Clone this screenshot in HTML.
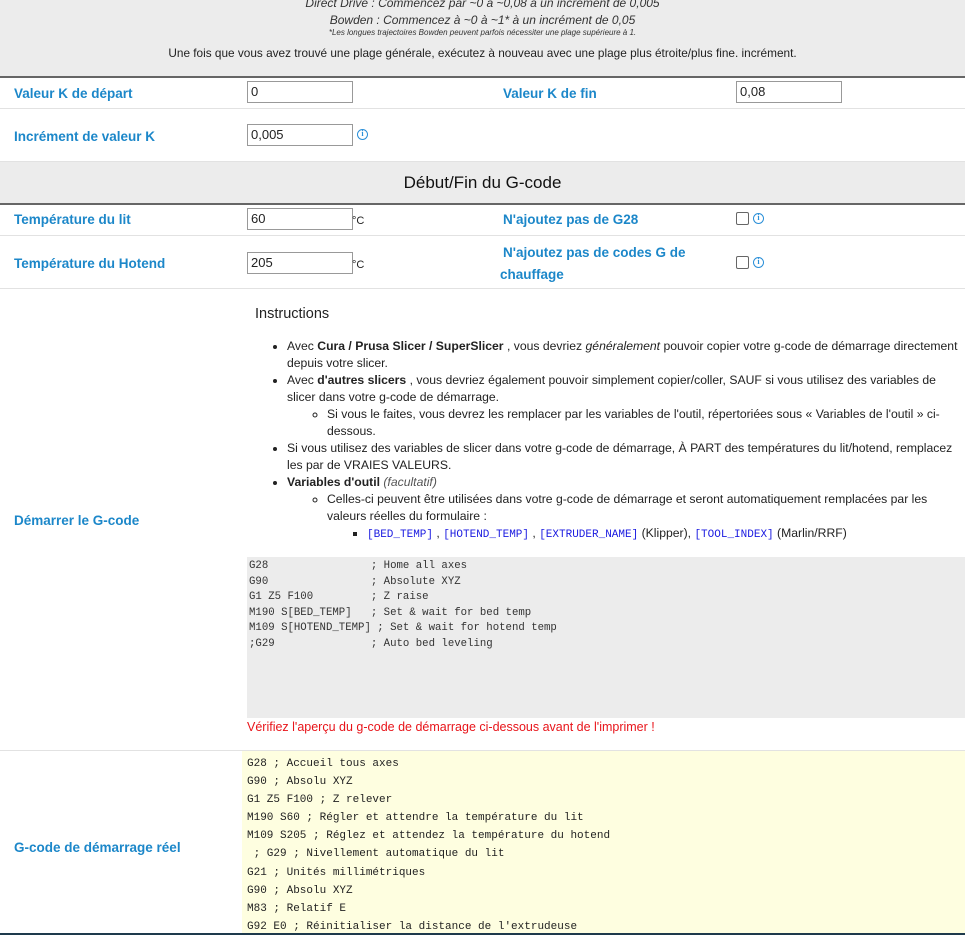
<!DOCTYPE html>
<html><head><meta charset="utf-8"><style>
*{box-sizing:border-box;margin:0;padding:0}
body{width:965px;height:935px;overflow:hidden;background:#fff;font-family:"Liberation Sans",sans-serif;color:#222;position:relative}
.a{position:absolute;white-space:nowrap}
.lbl{color:#1c87c9;font-weight:bold;font-size:13.5px}
.inp{position:absolute;height:22px;width:106px;border:1px solid #999;background:#fff;font-size:13px;padding:2px 3px;line-height:16px}
.hr{position:absolute;left:0;width:965px;height:1px;background:#e2e2e2}
.info{position:absolute;width:11px;height:11px;border:1.5px solid #2a8fd8;border-radius:50%;color:#2a8fd8;font-size:8px;font-weight:bold;text-align:center;line-height:8px;font-family:"Liberation Serif",serif}
.cb{position:absolute;width:13px;height:13px;border:1px solid #666;border-radius:2px;background:#fff}
.mono{font-family:"Liberation Mono",monospace}
ul{font-size:12.2px;line-height:17px;color:#222}
</style></head><body>
<div style="position:absolute;left:0;top:0;width:965px;height:76px;background:#ececec"></div>
<div style="position:absolute;left:0;top:76px;width:965px;height:2px;background:#666"></div>
<div class="a" style="left:0;width:965px;text-align:center;top:-4px;font-size:12px;font-style:italic;color:#333">Direct Drive : Commencez par ~0 à ~0,08 à un incrément de 0,005</div>
<div class="a" style="left:0;width:965px;text-align:center;top:13px;font-size:12px;font-style:italic;color:#333">Bowden : Commencez à ~0 à ~1* à un incrément de 0,05</div>
<div class="a" style="left:0;width:965px;text-align:center;top:28px;font-size:8px;font-style:italic;color:#333">*Les longues trajectoires Bowden peuvent parfois nécessiter une plage supérieure à 1.</div>
<div class="a" style="left:0;width:965px;text-align:center;top:46px;font-size:11.8px;color:#222">Une fois que vous avez trouvé une plage générale, exécutez à nouveau avec une plage plus étroite/plus fine. incrément.</div>

<div class="a lbl" style="left:14px;top:86px">Valeur K de départ</div>
<div class="inp" style="left:247px;top:81px">0</div>
<div class="a lbl" style="left:503px;top:86px">Valeur K de fin</div>
<div class="inp" style="left:736px;top:81px">0,08</div>
<div class="hr" style="top:108px"></div>
<div class="a lbl" style="left:14px;top:129px">Incrément de valeur K</div>
<div class="inp" style="left:247px;top:124px">0,005</div>
<div class="info" style="left:357px;top:129px">i</div>

<div style="position:absolute;left:0;top:161px;width:965px;height:42px;background:#ececec;border-top:1px solid #e2e2e2"></div>
<div style="position:absolute;left:0;top:203px;width:965px;height:2px;background:#666"></div>
<div class="a" style="left:0;width:965px;text-align:center;top:173px;font-size:17px;color:#111">Début/Fin du G-code</div>

<div class="a lbl" style="left:14px;top:212px">Température du lit</div>
<div class="inp" style="left:247px;top:208px">60</div>
<div class="a" style="left:352px;top:215px;font-size:11px">°C</div>
<div class="a lbl" style="left:503px;top:212px">N'ajoutez pas de G28</div>
<div class="cb" style="left:736px;top:212px"></div>
<div class="info" style="left:753px;top:213px">i</div>
<div class="hr" style="top:235px"></div>
<div class="a lbl" style="left:14px;top:256px">Température du Hotend</div>
<div class="inp" style="left:247px;top:252px">205</div>
<div class="a" style="left:352px;top:259px;font-size:11px">°C</div>
<div class="a lbl" style="left:503px;top:245px">N'ajoutez pas de codes G de</div>
<div class="a lbl" style="left:500px;top:267px">chauffage</div>
<div class="cb" style="left:736px;top:256px"></div>
<div class="info" style="left:753px;top:257px">i</div>
<div class="hr" style="top:288px"></div>

<div class="a lbl" style="left:14px;top:513px">Démarrer le G-code</div>
<div class="a" style="left:255px;top:306px;font-size:14.5px;color:#222">Instructions</div>
<div style="position:absolute;left:287px;top:338px;width:760px">
<ul style="list-style:disc">
<li>Avec <b>Cura / Prusa Slicer / SuperSlicer</b> , vous devriez <i>généralement</i> pouvoir copier votre g-code de démarrage directement<br>depuis votre slicer.</li>
<li>Avec <b>d'autres slicers</b> , vous devriez également pouvoir simplement copier/coller, SAUF si vous utilisez des variables de<br>slicer dans votre g-code de démarrage.
<ul style="list-style:circle;margin-left:40px"><li>Si vous le faites, vous devrez les remplacer par les variables de l'outil, répertoriées sous « Variables de l'outil » ci-<br>dessous.</li></ul></li>
<li>Si vous utilisez des variables de slicer dans votre g-code de démarrage, À PART des températures du lit/hotend, remplacez<br>les par de VRAIES VALEURS.</li>
<li><b>Variables d'outil</b> <i style="color:#555">(facultatif)</i>
<ul style="list-style:circle;margin-left:40px"><li>Celles-ci peuvent être utilisées dans votre g-code de démarrage et seront automatiquement remplacées par les<br>valeurs réelles du formulaire :
<ul style="list-style:square;margin-left:40px"><li><span class="mono" style="color:#1a1ae0;font-size:11px">[BED_TEMP]</span> , <span class="mono" style="color:#1a1ae0;font-size:11px">[HOTEND_TEMP]</span> , <span class="mono" style="color:#1a1ae0;font-size:11px">[EXTRUDER_NAME]</span> (Klipper), <span class="mono" style="color:#1a1ae0;font-size:11px">[TOOL_INDEX]</span> (Marlin/RRF)</li></ul></li></ul></li>
</ul></div>

<div class="mono" style="position:absolute;left:247px;top:557px;width:718px;height:161px;background:#ececec;font-size:10.7px;line-height:15.5px;padding:2px 2px;white-space:pre;color:#333">G28                ; Home all axes
G90                ; Absolute XYZ
G1 Z5 F100         ; Z raise
M190 S[BED_TEMP]   ; Set &amp; wait for bed temp
M109 S[HOTEND_TEMP] ; Set &amp; wait for hotend temp
;G29               ; Auto bed leveling</div>
<div class="a" style="left:247px;top:720px;font-size:12.5px;color:#e8141a">Vérifiez l'aperçu du g-code de démarrage ci-dessous avant de l'imprimer !</div>
<div class="hr" style="top:750px"></div>

<div class="a lbl" style="left:14px;top:840px">G-code de démarrage réel</div>
<div class="mono" style="position:absolute;left:242px;top:751px;width:723px;height:184px;background:#fefee0;font-size:11px;line-height:18.1px;padding:4px 5px;white-space:pre;color:#222">G28 ; Accueil tous axes
G90 ; Absolu XYZ
G1 Z5 F100 ; Z relever
M190 S60 ; Régler et attendre la température du lit
M109 S205 ; Réglez et attendez la température du hotend
 ; G29 ; Nivellement automatique du lit
G21 ; Unités millimétriques
G90 ; Absolu XYZ
M83 ; Relatif E
G92 E0 ; Réinitialiser la distance de l'extrudeuse</div>
<div style="position:absolute;left:0;top:933px;width:965px;height:2px;background:#1e3a4c"></div>
</body></html>
